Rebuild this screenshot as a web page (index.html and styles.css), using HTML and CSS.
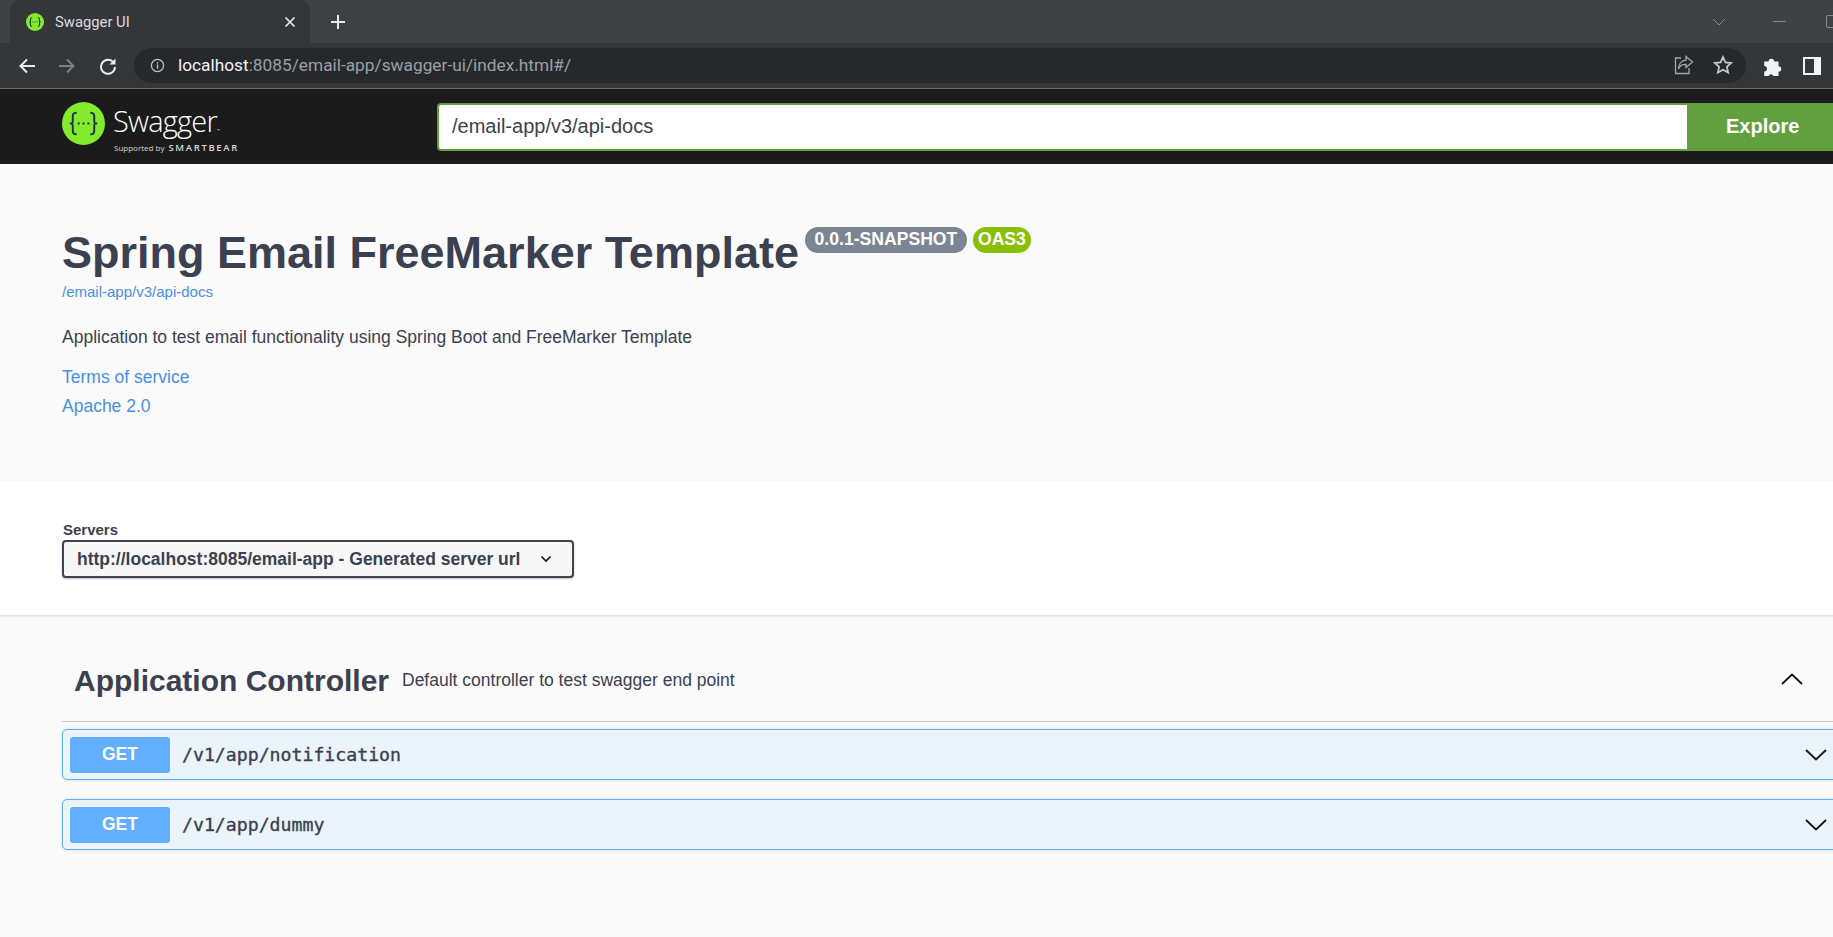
FILE: index.html
```html
<!DOCTYPE html>
<html lang="en">
<head>
<meta charset="utf-8">
<title>Swagger UI</title>
<link rel="stylesheet" href="styles.css">
</head>
<body>
<div class="page">
  <header class="chrome">
    <div class="tabstrip">
      <div class="tab">
        <svg class="favicon" viewBox="0 0 44 44"><circle cx="22" cy="22" r="22" fill="#85ea2d"/><path d="M15 11c-4 0-4 2-4 5v4c0 2-1 2-3 2 2 0 3 0 3 2v4c0 3 0 5 4 5M29 11c4 0 4 2 4 5v4c0 2 1 2 3 2-2 0-3 0-3 2v4c0 3 0 5-4 5" fill="none" stroke="#173647" stroke-width="2.500"/><path d="M16 22h2M21 22h2M26 22h2" stroke="#173647" stroke-width="2.500"/></svg>
        <span class="tab-title">Swagger UI</span>
        <svg class="tab-close" viewBox="0 0 12 12"><path d="M1.500 1.500l9 9M10.500 1.500l-9 9" stroke="#e8eaed" stroke-width="1.700"/></svg>
      </div>
      <svg class="new-tab" viewBox="0 0 16 16"><path d="M8 1v14M1 8h14" stroke="#e8eaed" stroke-width="2"/></svg>
      <div class="window-controls">
        <svg class="wc-down" viewBox="0 0 14 8"><path d="M1 1l6 6 6-6" fill="none" stroke="#85888c" stroke-width="1"/></svg>
        <span class="wc-min"></span>
        <span class="wc-max"></span>
      </div>
    </div>
    <div class="toolbar">
      <svg class="nav" viewBox="0 0 18 18"><path d="M17 9H3M9 2.500L2.500 9 9 15.500" fill="none" stroke="#e8eaed" stroke-width="2"/></svg>
      <svg class="nav" viewBox="0 0 18 18"><path d="M1 9h14M9 2.500L15.500 9 9 15.500" fill="none" stroke="#7d8083" stroke-width="2"/></svg>
      <svg class="nav" viewBox="0 0 18 18"><path d="M14.500 5.500A7 7 0 1 0 16 10" fill="none" stroke="#e8eaed" stroke-width="2"/><path d="M16.500 1.500v6h-6z" fill="#e8eaed"/></svg>
      <div class="omnibox">
        <svg class="site-info" viewBox="0 0 16 16"><circle cx="8" cy="8" r="6.500" fill="none" stroke="#bdc1c6" stroke-width="1.400"/><path d="M8 7v4.500M8 4.300v1.600" stroke="#bdc1c6" stroke-width="1.500"/></svg>
        <span class="url"><span class="host">localhost</span>:8085/email-app/swagger-ui/index.html#/</span>
        <svg class="share" viewBox="0 0 20 20"><path d="M7 3H1.500v15.500H15V13" fill="none" stroke="#a4a7ab" stroke-width="1.300"/><path d="M12 1.500l6.500 5.500-6.500 5.500V9.300C8 9.300 5.500 11 4.500 14c0-5 3-8.500 7.500-8.800z" fill="none" stroke="#a4a7ab" stroke-width="1.300"/></svg>
        <svg class="star" viewBox="0 0 20 20"><path d="M10 2l2.400 5.300 5.800.7-4.300 3.900 1.200 5.700L10 14.700l-5.100 2.900 1.200-5.700L1.800 8l5.800-.7z" fill="none" stroke="#c4c7ca" stroke-width="1.800"/></svg>
      </div>
      <svg class="puzzle" viewBox="0 0 20 20"><path d="M2 6h4a2.500 2.500 0 0 1 5 0h4v4.200a2.500 2.500 0 0 1 0 5V19h-4.500a2.500 2.500 0 0 0-4.500 0H2v-4a2.500 2.500 0 0 0 0-5z" fill="#f1f3f4"/></svg>
      <span class="sidepanel"></span>
    </div>
  </header>

  <section class="topbar">
    <div class="logo">
      <svg class="logo-mark" viewBox="0 0 44 44"><circle cx="22" cy="22" r="22" fill="#85ea2d"/><path d="M15 11c-4 0-4 2-4 5v4c0 2-1 2-3 2 2 0 3 0 3 2v4c0 3 0 5 4 5M29 11c4 0 4 2 4 5v4c0 2 1 2 3 2-2 0-3 0-3 2v4c0 3 0 5-4 5" fill="none" stroke="#173647" stroke-width="2"/><path d="M16 22h2M21 22h2M26 22h2" stroke="#173647" stroke-width="2"/></svg>
      <div class="logo-text">
        <span class="logo-name">Swagger<sup class="tm">™</sup></span>
        <span class="logo-sub">Supported by <b>SMARTBEAR</b></span>
      </div>
    </div>
    <form class="explore">
      <div class="url-input">/email-app/v3/api-docs</div>
      <div class="explore-btn">Explore</div>
    </form>
  </section>

  <section class="info">
    <div class="title-row">
      <h1>Spring Email FreeMarker Template</h1>
      <span class="badge badge-version">0.0.1-SNAPSHOT</span>
      <span class="badge badge-oas">OAS3</span>
    </div>
    <a class="docs-link">/email-app/v3/api-docs</a>
    <p class="description">Application to test email functionality using Spring Boot and FreeMarker Template</p>
    <a class="info-link">Terms of service</a>
    <a class="info-link">Apache 2.0</a>
  </section>

  <section class="servers">
    <span class="servers-label">Servers</span>
    <div class="select">
      <span>http://localhost:8085/email-app - Generated server url</span>
      <svg class="select-arrow" viewBox="0 0 12 8"><path d="M1.500 1.500L6 6l4.500-4.500" fill="none" stroke="#111" stroke-width="1.600"/></svg>
    </div>
  </section>

  <section class="operations">
    <div class="tag-header">
      <h2>Application Controller</h2>
      <span class="tag-desc">Default controller to test swagger end point</span>
      <svg class="tag-arrow" viewBox="0 0 22 12"><path d="M1 11L11 1.500 21 11" fill="none" stroke="#111" stroke-width="1.800"/></svg>
    </div>
    <div class="op">
      <span class="method">GET</span>
      <span class="path">/v1/app/notification</span>
      <svg class="op-arrow" viewBox="0 0 22 12"><path d="M1 1l10 9.500L21 1" fill="none" stroke="#111" stroke-width="1.800"/></svg>
    </div>
    <div class="op">
      <span class="method">GET</span>
      <span class="path">/v1/app/dummy</span>
      <svg class="op-arrow" viewBox="0 0 22 12"><path d="M1 1l10 9.500L21 1" fill="none" stroke="#111" stroke-width="1.800"/></svg>
    </div>
  </section>
</div>
</body>
</html>
```
FILE: styles.css
```css
* { box-sizing: border-box; }
html, body { margin: 0; height: 100%; overflow: hidden; background: #fafafa; }
body { font-family: "Liberation Sans", Arial, sans-serif; color: #3b4151; }
.page { width: 1920px; height: 937px; display: flex; flex-direction: column; }

/* browser chrome */
.chrome { flex: none; height: 89px; background: #35363a; border-bottom: 1px solid #6b6d70; }
.tabstrip { height: 43px; background: #3e4245; display: flex; align-items: center; padding-left: 10px; }
.tab { width: 300px; height: 43px; background: #35363a; border-radius: 10px 10px 0 0; display: flex; align-items: center; padding: 0 14px 0 16px; }
.favicon { width: 18px; height: 18px; flex: none; }
.tab-title { margin-left: 11px; font: 14.800px "Roboto", sans-serif; color: #dadce0; flex: 1; }
.tab-close { width: 12px; height: 12px; }
.new-tab { width: 16px; height: 16px; margin-left: 20px; }
.window-controls { margin-left: auto; display: flex; align-items: center; padding-right: 80px; }
.wc-down { width: 14px; height: 8px; margin-right: -3px; }
.wc-min { width: 13px; height: 1px; background: #85888c; margin-left: 50px; margin-right: 2px; }
.wc-max { width: 14px; height: 13px; border: 1px solid #85888c; border-radius: 2px; margin-left: 38px; }
.toolbar { height: 45px; display: flex; align-items: center; padding: 0 0 0 18px; }
.nav { width: 18px; height: 18px; margin-right: 22px; flex: none; }
.nav:nth-child(2) { margin-right: 23px; }
.omnibox { width: 1612px; height: 35px; margin-left: -5px; margin-bottom: 1px; background: #27282c; border-radius: 18px; display: flex; align-items: center; padding: 0 13px 0 16px; }
.site-info { width: 15px; height: 15px; flex: none; }
.url { margin-left: 13px; font: 17.300px "Roboto", sans-serif; color: #9aa0a6; flex: 1; white-space: nowrap; }
.host { color: #f1f3f4; }
.share { width: 20px; height: 20px; margin-right: 19px; }
.star { width: 20px; height: 20px; }
.puzzle { width: 22px; height: 22px; margin-left: 16px; flex: none; }
.sidepanel { width: 18px; height: 18px; margin-left: 19px; border: 2px solid #f1f3f4; border-right-width: 7px; background: #35363a; flex: none; }

/* swagger top bar */
.topbar { flex: none; height: 75px; background: #1b1b1b; display: flex; align-items: center; padding: 0 62px; }
.logo { width: 375px; display: flex; align-items: center; flex: none; }
.logo-mark { width: 43px; height: 43px; flex: none; margin-top: -7px; }
.logo-text { margin-left: 8px; display: flex; flex-direction: column; color: #fff; padding-top: 6px; }
.logo-name { font: 300 29px/30px "Open Sans", sans-serif; letter-spacing: -0.800px; }
.tm { font-size: 4px; vertical-align: baseline; }
.logo-sub { font: 8px/10px "Open Sans", sans-serif; color: #d8d8d8; margin-top: -3px; padding-left: 1px; }
.logo-sub b { font-size: 9.500px; font-weight: 600; letter-spacing: 1.650px; margin-left: 2px; }
.explore { flex: 1; display: flex; height: 48px; margin: 0; }
.url-input { flex: 1; background: #fff; border: 2px solid #62a03f; border-right: 0; border-radius: 4px 0 0 4px; font-size: 20px; line-height: 43px; padding-left: 13px; color: #3b4151; }
.explore-btn { width: 171px; background: #62a03f; color: #fff; font-weight: 700; font-size: 20px; line-height: 46px; padding-left: 39px; }

/* info */
.info { height: 317px; padding: 63px 62px 0; background: #fafafa; }
.title-row { display: flex; align-items: flex-start; height: 50px; }
h1 { margin: 0; font-size: 45px; line-height: 52px; font-weight: 700; color: #3b4151; white-space: nowrap; }
.badge { height: 26px; border-radius: 13px; color: #fff; font-weight: 700; font-size: 17.600px; line-height: 24px; text-align: center; padding: 0 9px; }
.badge-version { background: #7d8492; margin-left: 6px; width: 162px; padding: 0; }
.badge-oas { background: #89bf04; margin-left: 6px; width: 58px; padding: 0; }
.docs-link { display: block; margin-top: 5px; font-size: 15px; line-height: 20px; color: #4990e2; }
.description { margin: 25px 0 0; font-size: 17.500px; line-height: 20px; color: #3b4151; }
.info-link { display: block; font-size: 17.500px; line-height: 20px; color: #4990e2; margin-top: 9px; }
.description + .info-link { margin-top: 20px; }

/* servers */
.servers { height: 134px; padding: 41px 62px 0; background: #fff; box-shadow: 0 1px 2px rgba(0,0,0,.15); position: relative; }
.servers-label { display: block; font-size: 15px; font-weight: 700; line-height: 16px; padding-left: 1px; }
.select { margin-top: 2px; width: 512px; height: 38px; background: #f7f7f7; border: 2px solid #41444e; border-radius: 4px; box-shadow: 0 1px 2px rgba(0,0,0,.25); display: flex; align-items: center; padding: 0 20px 0 13px; font-size: 17.500px; font-weight: 700; white-space: nowrap; justify-content: space-between; }
.select-arrow { width: 12px; height: 8px; }

/* operations */
.operations { flex: 1; padding: 0 62px; background: #fafafa; }
.tag-header { height: 107px; padding: 25px 55px 0 12px; display: flex; align-items: center; border-bottom: 1px solid #c6c8cb; }
h2 { margin: 0; font-size: 30px; line-height: 34px; font-weight: 700; }
.tag-desc { margin-left: 13px; font-size: 17.500px; color: #3b4151; flex: 1; }
.tag-arrow { width: 22px; height: 12px; margin-top: -3px; }
.op { margin-top: 7px; height: 51px; background: #ebf3fb; border: 1px solid #61affe; border-radius: 5px; box-shadow: 0 0 3px rgba(0,0,0,.14); display: flex; align-items: center; padding: 0 30px 0 7px; }
.op + .op { margin-top: 19px; }
.method { width: 100px; height: 36px; background: #61affe; border-radius: 3px; color: #fff; font-weight: 700; font-size: 17.500px; line-height: 35px; text-align: center; flex: none; }
.path { margin-left: 12px; font: 400 18.200px "DejaVu Sans Mono", monospace; -webkit-text-stroke: 0.35px #3b4151; color: #3b4151; flex: 1; }
.op-arrow { width: 22px; height: 12px; }
```
